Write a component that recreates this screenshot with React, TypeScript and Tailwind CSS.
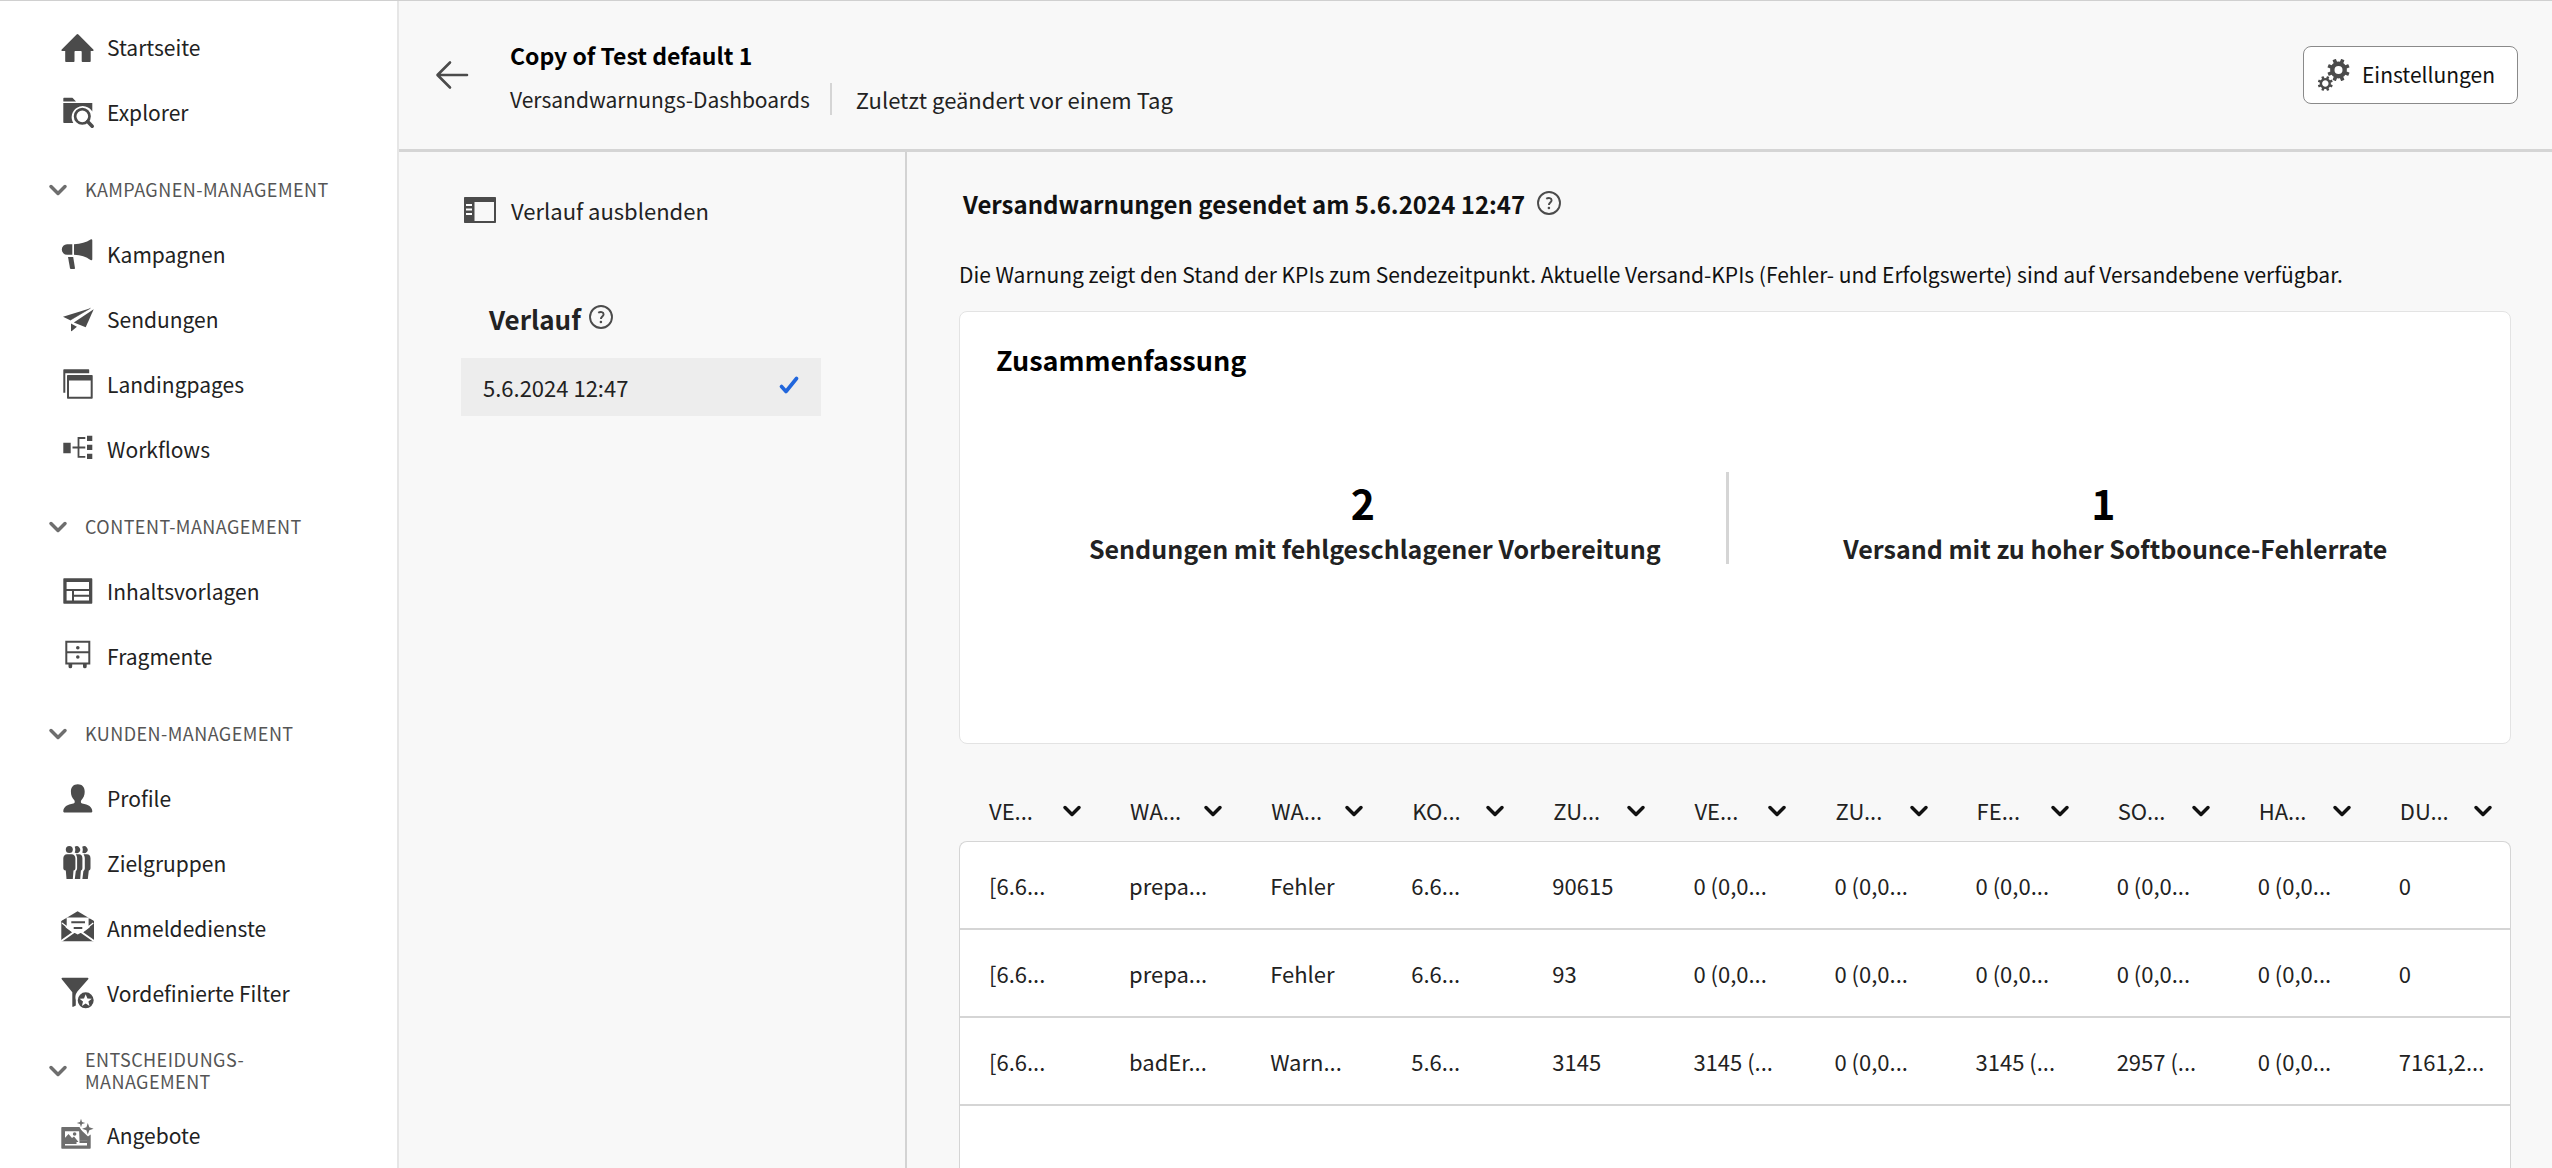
import React from "react";

type IconProps = { className?: string };

function Glyph({ children, className = "text-[#4b4b4b]" }: { children: React.ReactNode; className?: string }) {
  return (
    <svg viewBox="0 0 36 36" className={`size-9 shrink-0 ${className}`} fill="currentColor" aria-hidden="true">
      {children}
    </svg>
  );
}

const HomeIcon = () => (
  <Glyph>
    <path d="M17.6 4.5a1.3 1.3 0 0 1 1.8 0L34.3 19.4c.6.6.2 1.6-.7 1.6h-1.9v10.2c0 .5-.3.8-.8.8h-7.4c-.5 0-.8-.3-.8-.8v-9.4c0-.5-.3-.8-.8-.8h-5.6c-.5 0-.8.3-.8.8v9.4c0 .5-.3.8-.8.8H7c-.5 0-.8-.3-.8-.8V21H3.4c-.9 0-1.300-1-.7-1.600z" />
  </Glyph>
);

const ExplorerIcon = () => (
  <Glyph>
    <path d="M4.300 6.500V3.700c0-.6.400-1 1-1h7.400c.4 0 .8.200 1 .400L17 6.500z" />
    <path d="M4.300 8H33.300V16.400A11 11 0 0 0 14.300 28H5.300c-.6 0-1-.4-1-1z" />
    <circle cx="23.300" cy="21.300" r="7.200" fill="none" stroke="currentColor" strokeWidth="2.700" />
    <path d="M28.600 26.600l4.600 4.600" stroke="currentColor" strokeWidth="3.600" strokeLinecap="round" />
  </Glyph>
);

const CampaignIcon = () => (
  <Glyph>
    <path d="M13.300 7.300V17.700H8a5.200 5.200 0 0 1 0-10.400z" />
    <path d="M15 7.300c7-.3 12-2 16.600-4.800.9-.5 1.700-.1 1.700.8v19c0 1-.8 1.300-1.700.8C27 19.500 22 18 15 17.700z" />
    <path d="M9 20h5.200L16 31.200c0 .5-.3.800-.8.800h-3.300c-.5 0-.8-.3-.9-.8z" />
  </Glyph>
);

const SendIcon = () => (
  <Glyph>
    <path d="M4 14.700L31.500 6.200 11.200 18.200z" />
    <path d="M34.700 7.300L26.700 25.200 14.800 20.600z" />
    <path d="M12 21.500l5.900 3.300L12.600 29.200 12 29z" />
    <path d="M11.200 18.200L31.500 6.200" stroke="currentColor" strokeWidth=".6" />
  </Glyph>
);

const LandingIcon = () => (
  <Glyph>
    <path d="M5.300 2.300H29.500c.5 0 .7.300.7.700v3.300H6.300V25.700H4.300V3.300c0-.6.400-1 1-1z" />
    <path d="M9 8H32.700c.6 0 1 .4 1 1V30.700c0 .6-.4 1-1 1H9c-.6 0-1-.4-1-1V9c0-.6.4-1 1-1zM10 13.500V29.700H31.700V13.500z" fillRule="evenodd" />
  </Glyph>
);

const WorkflowIcon = () => (
  <Glyph>
    <path d="M4.300 10.800h7.400v10.400H4.300zM28 3.700h5.300V9H28zM28 12.700h5.300V18H28zM28 21.700h5.300V27H28z" />
    <path d="M13.500 15.500H26.300M26.300 6H19.500V24.800H26.300" fill="none" stroke="currentColor" strokeWidth="1.800" />
  </Glyph>
);

const TemplateIcon = () => (
  <Glyph>
    <path d="M5.300 4.300H32.300c.6 0 1 .4 1 1V28.700c0 .6-.4 1-1 1H5.300c-.6 0-1-.4-1-1V5.300c0-.6.400-1 1-1zM7.600 8V15H30V8zM7.600 17V26.400H13V17zM15 17v3.700H30V17zM15 22.700v3.700H30V22.700z" fillRule="evenodd" />
  </Glyph>
);

const FragmentIcon = () => (
  <Glyph>
    <path d="M7.300 2.700H30.300V24.500H7.300zM7.300 13.200H30.300" fill="none" stroke="currentColor" strokeWidth="2" />
    <circle cx="18.800" cy="8.700" r="1.800" />
    <circle cx="18.800" cy="18" r="1.800" />
    <path d="M9.500 25h3.700v2.500a1.500 1.500 0 0 1-3.700 0zM24 25h3.700v2.500a1.500 1.500 0 0 1-3.700 0z" />
  </Glyph>
);

const ProfileIcon = () => (
  <Glyph>
    <path d="M18.800 3.300c4.200 0 6.900 2.700 6.900 7.400 0 3.600-1.300 6.300-3.200 8.200-.5.500-.6 1-.6 1.600v.6c0 .8.500 1.400 1.300 1.500 6.100.8 10.100 3.600 10.100 7.700v.3c0 .5-.3.800-.8.800H5.100c-.5 0-.8-.3-.8-.8v-.3c0-4.100 4-6.900 10.100-7.700.8-.1 1.300-.7 1.300-1.500v-.6c0-.6-.1-1.100-.6-1.600-1.900-1.900-3.200-4.600-3.200-8.200 0-4.700 2.700-7.400 6.900-7.400z" />
  </Glyph>
);

const AudienceIcon = () => (
  <Glyph>
    <circle cx="10.300" cy="3.600" r="3.500" />
    <path d="M8 8.300h4.600c2.300 0 3.800 1.700 3.800 4.200V22c0 1.500-.6 2.300-1.900 2.500L13.800 33H7.500L6.800 24.500C5 24.300 4.300 23.500 4.300 22v-9.500c0-2.500 1.500-4.200 3.700-4.200z" />
    <path d="M15.700.8a3.500 3.500 0 1 1 0 5.800c.8-1.900.8-3.900 0-5.800zM16.800 8.300h3.300c2 0 3.300 1.500 3.300 4V22c0 1.500-.6 2.300-1.500 2.500L21.200 33h-5.400l1-8c.9-.7 1.300-1.700 1.300-3V12.500c0-1.700-.5-3.100-1.300-4.200z" />
    <path d="M23.200.8a3.500 3.500 0 1 1 0 5.800c.8-1.900.8-3.900 0-5.800zM24.500 8.300h3.400c2.200 0 3.600 1.600 3.600 4V22c0 1.500-.6 2.300-1.700 2.500L28.800 33h-5.400l1-8c.9-.7 1.400-1.700 1.400-3V12.500c0-1.700-.5-3.100-1.300-4.200z" />
  </Glyph>
);

const MailIcon = () => (
  <Glyph>
    <path d="M2.300 10L18.600.3 35 10V29.300c0 .6-.4 1-1 1H3.300c-.6 0-1-.4-1-1z" />
    <path d="M7.700 7.500H29.600V16l-7 5.200L35 30M2.300 30l12.400-8.800L7.700 16V7.500" fill="none" stroke="white" strokeWidth="2" />
    <path d="M7.700 7.500H29.600V16l-6.800 5.200-4.100 2.300-4.200-2.300L7.700 16z" fill="white" />
    <path d="M2.300 10.500l5.400-3.200V15zM35 10.500l-5.400-3.200V15z" />
    <path d="M12.300 11.300H26M14.700 17H23.300" stroke="currentColor" strokeWidth="2" />
    <path d="M3 12l11 8.700M34.300 12l-11 8.700" stroke="white" strokeWidth="1.300" />
  </Glyph>
);

const FilterIcon = () => (
  <Glyph>
    <path d="M3.400 1.700H28.600c.8 0 1.100.9.600 1.500L18.400 15.600a10 10 0 0 0-1.600 8.600V29.500l-2.400 1.300c-.6.300-1.100 0-1.100-.6V16.300L2.800 3.200c-.5-.6-.2-1.500.6-1.500z" />
    <path d="M26.700 16.300a8 8 0 1 1 0 16 8 8 0 0 1 0-16zM26.700 18.200l-1.700 4.200-4.400.3 3.400 2.800-1.100 4.400 3.800-2.400 3.800 2.400-1.100-4.400 3.400-2.800-4.400-.3z" fillRule="evenodd" />
  </Glyph>
);

const OfferIcon = () => (
  <Glyph className="text-[#6e6e6e]">
    <path d="M3.300 9H20.500l2.300 4.200H6V23.500H17.500V26H6v1.600H28V25H20.500V22.500H28.200V19l3.500-2.500V29.700c0 .6-.4 1-1 1H3.300c-.6 0-1-.4-1-1V10c0-.6.400-1 1-1z" />
    <path d="M5 21l4.500-5 3.500 4 2-1.500 4.500 5.500H5zM20 10l9 8.500v4.300h-8.500z" />
    <circle cx="15.600" cy="16" r="1.800" />
    <path d="M22 .7l1 3.300 3.300 1-3.300 1-1 3.300-1-3.300-3.300-1 3.300-1zM28.800 5l1.500 4.300 4.300 1.400-4.300 1.500-1.500 4.300-1.400-4.300-4.300-1.500 4.300-1.400z" stroke="white" strokeWidth="1" paintOrder="stroke" />
  </Glyph>
);

function Chevron({ className = "" }: IconProps) {
  return (
    <svg viewBox="0 0 20 14" className={`h-3.5 w-5 shrink-0 ${className}`} fill="none" stroke="currentColor" strokeWidth="3.500" strokeLinecap="round" strokeLinejoin="round" aria-hidden="true">
      <path d="M3 3.500l7 7 7-7" />
    </svg>
  );
}

function HelpButton({ label }: { label: string }) {
  return (
    <button type="button" aria-label={label} className="mb-0.5 shrink-0 text-[#4b4b4b]">
      <svg viewBox="0 0 24 24" className="size-6" fill="none" stroke="currentColor" strokeWidth="1.900" aria-hidden="true">
        <circle cx="12" cy="12" r="11" />
        <path d="M9.200 7.800c2.400-1.500 5.400-.7 5.400 1.500 0 2.100-2.700 2.400-2.700 4.700" />
        <circle cx="11.900" cy="17" r="1.300" fill="currentColor" stroke="none" />
      </svg>
    </button>
  );
}

function Gear({ cx, cy, r, hole, tooth }: { cx: number; cy: number; r: number; hole: number; tooth: number }) {
  return (
    <g transform={`translate(${cx} ${cy})`}>
      <circle r={(r + hole) / 2} fill="none" stroke="currentColor" strokeWidth={r - hole} />
      {[22.5, 67.5, 112.5, 157.5, 202.5, 247.5, 292.5, 337.5].map((a) => (
        <rect key={a} x={-tooth / 2} y={-r - tooth * 0.8} width={tooth} height={tooth * 1.2} rx=".5" transform={`rotate(${a})`} />
      ))}
    </g>
  );
}

type Item = { label: string; icon: () => React.JSX.Element };

const topItems: Item[] = [
  { label: "Startseite", icon: HomeIcon },
  { label: "Explorer", icon: ExplorerIcon },
];

const sections: { title: string; items: Item[] }[] = [
  {
    title: "KAMPAGNEN-MANAGEMENT",
    items: [
      { label: "Kampagnen", icon: CampaignIcon },
      { label: "Sendungen", icon: SendIcon },
      { label: "Landingpages", icon: LandingIcon },
      { label: "Workflows", icon: WorkflowIcon },
    ],
  },
  {
    title: "CONTENT-MANAGEMENT",
    items: [
      { label: "Inhaltsvorlagen", icon: TemplateIcon },
      { label: "Fragmente", icon: FragmentIcon },
    ],
  },
  {
    title: "KUNDEN-MANAGEMENT",
    items: [
      { label: "Profile", icon: ProfileIcon },
      { label: "Zielgruppen", icon: AudienceIcon },
      { label: "Anmeldedienste", icon: MailIcon },
      { label: "Vordefinierte Filter", icon: FilterIcon },
    ],
  },
  { title: "ENTSCHEIDUNGS-MANAGEMENT", items: [{ label: "Angebote", icon: OfferIcon }] },
];

const columns = ["VE...", "WA...", "WA...", "KO...", "ZU...", "VE...", "ZU...", "FE...", "SO...", "HA...", "DU..."];

const rows = [
  ["[6.6...", "prepa...", "Fehler", "6.6...", "90615", "0 (0,0...", "0 (0,0...", "0 (0,0...", "0 (0,0...", "0 (0,0...", "0"],
  ["[6.6...", "prepa...", "Fehler", "6.6...", "93", "0 (0,0...", "0 (0,0...", "0 (0,0...", "0 (0,0...", "0 (0,0...", "0"],
  ["[6.6...", "badEr...", "Warn...", "5.6...", "3145", "3145 (...", "0 (0,0...", "3145 (...", "2957 (...", "0 (0,0...", "7161,2..."],
];

function NavItem({ label, icon: Icon }: Item) {
  return (
    <li>
      <a href="#" className="flex h-[65px] items-center gap-3 pl-[59px]">
        <Icon />
        <span className="pb-0.5">{label}</span>
      </a>
    </li>
  );
}

function Sidebar() {
  return (
    <nav aria-label="Hauptnavigation" className="w-[399px] shrink-0 border-r-2 border-[#e6e6e6] bg-white pt-3.5 text-[21px] leading-8 text-[#222]">
      <ul>
        {topItems.map((item) => (
          <NavItem key={item.label} {...item} />
        ))}
      </ul>
      {sections.map((section) => (
        <section key={section.title} className="mt-3">
          <button type="button" aria-expanded="true" className="flex h-[65px] w-full items-center gap-[17px] pr-12 pl-12 text-left text-[#6e6e6e]">
            <Chevron />
            <span className="flex-1 pb-0.5 text-[18px] leading-[22px] tracking-wide text-[#555]">{section.title}</span>
          </button>
          <ul>
            {section.items.map((item) => (
              <NavItem key={item.label} {...item} />
            ))}
          </ul>
        </section>
      ))}
    </nav>
  );
}

function Header() {
  return (
    <header className="flex h-[151px] shrink-0 items-center border-b-3 border-[#d5d5d5] pr-[34px] pl-9">
      <button type="button" aria-label="Zurück" className="text-[#4b4b4b]">
        <svg viewBox="0 0 34 30" className="h-[30px] w-[34px]" fill="none" stroke="currentColor" strokeWidth="2.600" strokeLinecap="round" strokeLinejoin="round" aria-hidden="true">
          <path d="M32 15H3M15 2.500L2.500 15 15 27.500" />
        </svg>
      </button>
      <div className="ml-[41px] pt-1">
        <h1 className="text-[23px] leading-8 font-bold text-black">Copy of Test default 1</h1>
        <div className="mt-3 flex items-center text-[22px] leading-8 text-[#222]">
          <span className="text-[21px]">Versandwarnungs-Dashboards</span>
          <span className="mr-6 ml-5 h-8 w-0.5 bg-[#d5d5d5]" />
          <span>Zuletzt geändert vor einem Tag</span>
        </div>
      </div>
      <button type="button" className="ml-auto flex h-[58px] items-center gap-2.5 rounded-lg border border-[#8a8a8a] bg-white pr-[22px] pl-3 text-[21px] text-[#111]">
        <svg viewBox="0 0 36 36" className="size-9 text-[#4b4b4b]" fill="currentColor" aria-hidden="true">
          <Gear cx={22.500} cy={13} r={8.400} hole={4} tooth={3.600} />
          <Gear cx={9.300} cy={26.500} r={5.600} hole={3.200} tooth={2.500} />
        </svg>
        Einstellungen
      </button>
    </header>
  );
}

function History() {
  return (
    <aside className="w-[508px] shrink-0 border-r-2 border-[#d3d3d3] pt-[38px] pl-[62px] text-[22px] text-[#222]">
      <button type="button" className="ml-0.5 flex h-10 items-center gap-3.5">
        <svg viewBox="0 0 34 28" className="h-7 w-[34px] text-[#4b4b4b]" aria-hidden="true">
          <path d="M2 1H32c.6 0 1 .4 1 1V26c0 .6-.4 1-1 1H2c-.6 0-1-.4-1-1V2c0-.6.400-1 1-1zM11.500 6V25H31V6z" fill="currentColor" fillRule="evenodd" />
          <path d="M3 9h6M3 13.500h6M3 18h6" stroke="white" strokeWidth="1.800" />
        </svg>
        Verlauf ausblenden
      </button>
      <h2 className="mt-[68px] ml-7 flex h-10 items-center gap-2 text-[26px] font-bold">
        Verlauf
        <HelpButton label="Hilfe zum Verlauf" />
      </h2>
      <button type="button" className="mt-5 flex h-[58px] w-[360px] items-center justify-between bg-[#ededed] px-[22px] text-[22px]">
        5.6.2024 12:47
        <svg viewBox="0 0 20 18" className="mb-1 h-[18px] w-5" fill="none" stroke="#2166dc" strokeWidth="3.600" strokeLinecap="round" strokeLinejoin="round" aria-hidden="true">
          <path d="M2.500 10.500l4.500 5L17.500 2.500" />
        </svg>
      </button>
    </aside>
  );
}

function Kpi({ value, label }: { value: string; label: string }) {
  return (
    <div className="flex flex-col items-center text-center font-bold">
      <span className="pr-6 text-[41px] leading-[60px] text-black">{value}</span>
      <span className="text-[25px] leading-8 text-[#222]">{label}</span>
    </div>
  );
}

function Results() {
  return (
    <main className="flex min-w-0 flex-1 flex-col pt-8 pr-[41px] pl-[52px]">
      <h2 className="flex h-10 items-center gap-3 pl-1 text-[24px] font-bold text-[#111]">
        Versandwarnungen gesendet am 5.6.2024 12:47
        <HelpButton label="Hilfe zu Versandwarnungen" />
      </h2>
      <p className="mt-[34px] text-[21px] leading-8 text-[#111]">
        Die Warnung zeigt den Stand der KPIs zum Sendezeitpunkt. Aktuelle Versand-KPIs (Fehler- und Erfolgswerte) sind auf Versandebene verfügbar.
      </p>
      <section className="mt-[21px] h-[433px] rounded-lg border border-[#e3e3e3] bg-white pt-7">
        <h3 className="pl-9 text-[27px] leading-10 font-bold text-black">Zusammenfassung</h3>
        <div className="mt-[92px] grid grid-cols-[49fr_3px_50fr]">
          <div className="pl-16">
            <Kpi value="2" label="Sendungen mit fehlgeschlagener Vorbereitung" />
          </div>
          <div className="h-[92px] bg-[#d5d5d5]" />
          <div className="pr-2">
            <Kpi value="1" label="Versand mit zu hoher Softbounce-Fehlerrate" />
          </div>
        </div>
      </section>
      <table className="mt-[38px] w-full table-fixed border-separate border-spacing-0 text-left text-[22px] text-[#222]">
        <thead>
          <tr>
            {columns.map((c, i) => (
              <th key={i} scope="col" className="h-[59px] p-0 pb-0.5 font-normal">
                <button type="button" className="flex w-full items-center justify-between pr-[18px] pl-[30px]">
                  {c}
                  <Chevron className="text-[#111]" />
                </button>
              </th>
            ))}
          </tr>
        </thead>
        <tbody>
          {rows.map((row, r) => (
            <tr key={r} className="group">
              {row.map((cell, c) => (
                <td key={c} className="h-[88px] border-b-2 border-[#d5d5d5] bg-white p-0 pl-[29px] whitespace-nowrap group-first:h-[89px] group-first:border-t first:border-l last:border-r group-first:first:rounded-tl-lg group-first:last:rounded-tr-lg">
                  {cell}
                </td>
              ))}
            </tr>
          ))}
        </tbody>
      </table>
      <div className="flex-1 border-x border-[#d5d5d5] bg-white" />
    </main>
  );
}

export default function App() {
  return (
    <div className="flex min-h-screen border-t border-[#d0d0d0] bg-[#f8f8f8] font-['Noto_Sans_CJK_SC','Noto_Sans',sans-serif]">
      <Sidebar />
      <div className="flex min-w-0 flex-1 flex-col">
        <Header />
        <div className="flex flex-1">
          <History />
          <Results />
        </div>
      </div>
    </div>
  );
}
